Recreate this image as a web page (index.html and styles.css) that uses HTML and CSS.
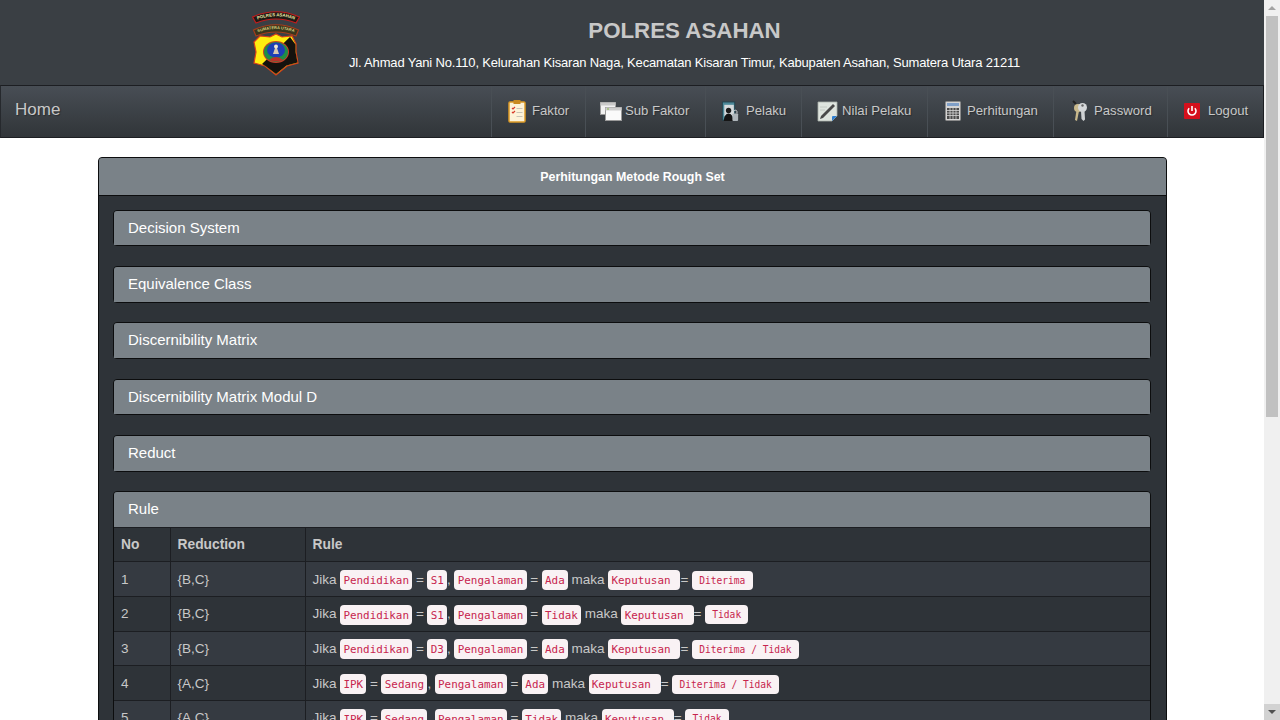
FILE: index.html
```html
<!DOCTYPE html>
<html lang="id">
<head>
<meta charset="utf-8">
<title>Polres Asahan</title>
<link rel="stylesheet" href="styles.css">
</head>
<body>
<div class="page">
  <header class="masthead">
    <svg class="logo" viewBox="0 0 48 66" aria-hidden="true">
      <defs>
        <path id="arc1" d="M3 10.500 Q24 2 45 10.500"/>
        <path id="arc2" d="M4 23 Q24 15 44 23"/>
      </defs>
      <path d="M0.500 7 Q24 -3.500 47.500 7 L44 13 Q24 5 4 13Z" fill="#1d1a16" stroke="#c01c1c" stroke-width="1.200"/>
      <text class="logo-t"><textPath href="#arc1" startOffset="50%">POLRES ASAHAN</textPath></text>
      <path d="M1.500 20 Q24 9.500 46.500 20 L44 26 Q24 18 4 26Z" fill="#38361c" stroke="#a33c1c" stroke-width="1.200"/>
      <text class="logo-t2"><textPath href="#arc2" startOffset="50%">SUMATERA UTARA</textPath></text>
      <path d="M24 24 L30 27 L40 26 L44 34 L44 42 L46 53 L35 56 L24 65 L13 56 L2 53 L4 42 L2 32 L8 26 L18 27Z" fill="#ffee10" stroke="#d8401a" stroke-width="1.200"/>
      <path d="M38 27 L43.500 34.500 L43.500 42 L45.500 52.500 L34.500 55.500 L24 64 L13.500 56 L10 54Z" fill="#15120e"/>
      <ellipse cx="24" cy="42" rx="13" ry="11" fill="#c8402a"/>
      <ellipse cx="24" cy="42" rx="12" ry="10" fill="#1f8f45"/>
      <ellipse cx="24" cy="40" rx="9" ry="7.500" fill="#1d3fb5"/>
      <path d="M17 50 Q24 44 31 50 Q24 53 17 50Z" fill="#b8322a"/>
      <path d="M21 44 L24 35 L27 44Z" fill="#d8c8b0"/>
      <circle cx="24" cy="36.500" r="2" fill="#f0e6d0"/>
    </svg>
    <div class="brand">
      <h1 class="brand-title">POLRES ASAHAN</h1>
      <p class="brand-address">Jl. Ahmad Yani No.110, Kelurahan Kisaran Naga, Kecamatan Kisaran Timur, Kabupaten Asahan, Sumatera Utara 21211</p>
    </div>
  </header>

  <nav class="navbar">
    <a class="nav-home">Home</a>
    <ul class="nav-list">
      <li class="nav-item item-faktor">
        <svg class="ico ico-faktor" viewBox="0 0 18 24" aria-hidden="true">
          <rect x="1" y="3" width="16" height="20" rx="1" fill="#fdf3d8" stroke="#dd9a24" stroke-width="1.500"/>
          <rect x="5.500" y="1" width="7" height="4" fill="#c98a20"/>
          <path d="M4 9l1 1 2-2M4 13l1 1 2-2" fill="none" stroke="#d83a2a" stroke-width="1.200"/>
          <path d="M8.500 9.500h6M8.500 13.500h6M8.500 17.500h6" stroke="#c9c4b6"/>
        </svg>
        <span>Faktor</span>
      </li>
      <li class="nav-item item-sub">
        <svg class="ico ico-sub" viewBox="0 0 22 19" aria-hidden="true">
          <rect x="0.500" y="0.500" width="15" height="12" fill="#f1f1f1" stroke="#9a9a9a"/>
          <rect x="0.500" y="0.500" width="15" height="3" fill="#c9c9c9"/>
          <rect x="5.500" y="5.500" width="16" height="13" fill="#fafafa" stroke="#9a9a9a"/>
          <rect x="5.500" y="5.500" width="16" height="3" fill="#cfcfcf"/>
          <rect x="7" y="6.500" width="2" height="1" fill="#8ab84a"/>
        </svg>
        <span>Sub Faktor</span>
      </li>
      <li class="nav-item item-pelaku">
        <svg class="ico ico-pelaku" viewBox="0 0 18 22" aria-hidden="true">
          <rect x="1" y="1" width="13" height="19" fill="#4d8a9a" stroke="#23434f"/>
          <rect x="3" y="4" width="10" height="12" fill="#d5dadc"/>
          <circle cx="7.500" cy="10" r="2.800" fill="#1c1c1c"/>
          <path d="M2.500 21 Q3 13 7.500 13 Q12 13 12.500 21Z" fill="#151515"/>
          <rect x="11.500" y="13" width="6" height="8" rx="1" fill="#aeb5ba"/>
          <path d="M12.800 13V11a1.800 1.800 0 0 1 3.500 0v2" fill="none" stroke="#d6d9dc"/>
        </svg>
        <span>Pelaku</span>
      </li>
      <li class="nav-item item-nilai">
        <svg class="ico ico-nilai" viewBox="0 0 21 21" aria-hidden="true">
          <path d="M1 1H20V15L15 20H1Z" fill="#dfe5df" stroke="#a8b0a8" stroke-width="0.800"/>
          <path d="M15 20L20 15H16Q15 15 15 16Z" fill="#2f7fd0"/>
          <path d="M4 15L16 3l2 2L6 17l-3 1Z" fill="#4a4a4a"/>
          <path d="M3 6h7M3 9h5" stroke="#c4cac4"/>
        </svg>
        <span>Nilai Pelaku</span>
      </li>
      <li class="nav-item item-hitung">
        <svg class="ico ico-hitung" viewBox="0 0 16 20" aria-hidden="true">
          <rect x="0.500" y="0.500" width="15" height="19" rx="1" fill="#d4d4d4" stroke="#8b8b8b"/>
          <rect x="2" y="2" width="12" height="3" fill="#7f9fc8"/>
          <path d="M2 7h12v11H2z" fill="#4a4a4a"/>
          <path d="M2 9.500h12M2 12h12M2 14.500h12M5 7v11M8 7v11M11 7v11" stroke="#d4d4d4" stroke-width="0.800"/>
        </svg>
        <span>Perhitungan</span>
      </li>
      <li class="nav-item item-pass">
        <svg class="ico ico-pass" viewBox="0 0 16 22" aria-hidden="true">
          <path d="M1 1l3 3" stroke="#222" stroke-width="2"/>
          <circle cx="6" cy="8" r="4" fill="#c9b98c"/>
          <path d="M4.500 10L3 20l2 1 2-10Z" fill="#c9b98c"/>
          <circle cx="10.500" cy="7.500" r="4.500" fill="#d5d8da"/>
          <path d="M9 10.500h3.500l.500 9-1.500 1.500L9.500 19Z" fill="#cfd2d4"/>
          <circle cx="10.500" cy="5.500" r="1.200" fill="#666"/>
        </svg>
        <span>Password</span>
      </li>
      <li class="nav-item item-logout">
        <svg class="ico ico-logout" viewBox="0 0 16 16" aria-hidden="true">
          <rect width="16" height="16" rx="1" fill="#d4101c"/>
          <path d="M5.200 5.200a4 4 0 1 0 5.600 0" fill="none" stroke="#fff" stroke-width="1.600"/>
          <path d="M8 3v5" stroke="#fff" stroke-width="1.600"/>
        </svg>
        <span>Logout</span>
      </li>
    </ul>
  </nav>

  <main class="content">
    <section class="panel panel-outer">
      <h2 class="outer-heading">Perhitungan Metode Rough Set</h2>
      <div class="outer-body">
        <section class="panel panel-inner"><h3 class="inner-heading">Decision System</h3></section>
        <section class="panel panel-inner"><h3 class="inner-heading">Equivalence Class</h3></section>
        <section class="panel panel-inner"><h3 class="inner-heading">Discernibility Matrix</h3></section>
        <section class="panel panel-inner"><h3 class="inner-heading">Discernibility Matrix Modul D</h3></section>
        <section class="panel panel-inner"><h3 class="inner-heading">Reduct</h3></section>
        <section class="panel panel-inner">
          <h3 class="inner-heading">Rule</h3>
          <table class="rules">
            <thead>
              <tr><th class="col-no">No</th><th class="col-red">Reduction</th><th>Rule</th></tr>
            </thead>
            <tbody>
              <tr><td>1</td><td>{B,C}</td><td>Jika <code>Pendidikan</code> = <code>S1</code>, <code>Pengalaman</code> = <code>Ada</code> maka <code>Keputusan </code>= <code class="val"> Diterima </code></td></tr>
              <tr><td>2</td><td>{B,C}</td><td>Jika <code>Pendidikan</code> = <code>S1</code>, <code>Pengalaman</code> = <code>Tidak</code> maka <code>Keputusan </code>= <code class="val"> Tidak </code></td></tr>
              <tr><td>3</td><td>{B,C}</td><td>Jika <code>Pendidikan</code> = <code>D3</code>, <code>Pengalaman</code> = <code>Ada</code> maka <code>Keputusan </code>= <code class="val"> Diterima / Tidak </code></td></tr>
              <tr><td>4</td><td>{A,C}</td><td>Jika <code>IPK</code> = <code>Sedang</code>, <code>Pengalaman</code> = <code>Ada</code> maka <code>Keputusan </code>= <code class="val"> Diterima / Tidak </code></td></tr>
              <tr><td>5</td><td>{A,C}</td><td>Jika <code>IPK</code> = <code>Sedang</code>, <code>Pengalaman</code> = <code>Tidak</code> maka <code>Keputusan </code>= <code class="val"> Tidak </code></td></tr>
            </tbody>
          </table>
        </section>
      </div>
    </section>
  </main>
</div>
<aside class="scrollbar" aria-hidden="true">
  <div class="sb-btn"><span class="arrow-up"></span></div>
  <div class="sb-track"><div class="sb-thumb"></div></div>
  <div class="sb-btn sb-btn-down"><span class="arrow-down"></span></div>
</aside>
</body>
</html>
```
FILE: styles.css
```css
* { box-sizing: border-box; }
html, body { height: 720px; margin: 0; overflow: hidden; }
body {
  display: flex;
  background: #fff;
  font-family: "Liberation Sans", Arial, sans-serif;
  font-size: 14px;
  color: #c8c8c8;
}
.page { flex: 1; min-width: 0; height: 720px; overflow: hidden; }

.masthead {
  display: flex;
  height: 85px;
  padding: 10px 195px 0 252px;
  background: #3a3f44;
}
.logo { width: 48px; height: 66px; flex: none; }
.logo-t { font: bold 4.400px "Liberation Sans", sans-serif; fill: #efe8a8; text-anchor: middle; }
.logo-t2 { font: bold 4px "Liberation Sans", sans-serif; fill: #d8d080; text-anchor: middle; }
.brand { flex: 1; text-align: center; }
.brand-title {
  margin: 8px 0 0;
  font-size: 22.300px;
  line-height: 26px;
  font-weight: bold;
  color: #c8c8c8;
}
.brand-address {
  margin: 10px 0 0;
  font-size: 13px;
  line-height: 18px;
  color: #fff;
  letter-spacing: -0.170px;
  white-space: nowrap;
}

.navbar {
  display: flex;
  justify-content: space-between;
  height: 53px;
  background: linear-gradient(#484e55, #3a3f44 60%, #313539);
  border: 1px solid #1c1e22;
  border-left-color: #26292d;
  text-shadow: 1px 1px 1px rgba(0, 0, 0, .3);
}
.nav-home {
  padding: 14px 14px 0;
  font-size: 17px;
  line-height: 20px;
  color: #c8c8c8;
}
.nav-list { display: flex; margin: 0; padding: 0; list-style: none; }
.nav-item {
  display: flex;
  align-items: center;
  flex: none;
  padding-left: 15px;
  padding-bottom: 1px;
  border-left: 1px solid #494f55;
  font-size: 13.150px;
  color: #c8c8c8;
}
.nav-item span { padding-bottom: 2px; }
.item-faktor { width: 94px; padding-left: 16px; }
.item-sub { width: 120px; padding-left: 14px; }
.item-pelaku { width: 96px; }
.item-nilai { width: 126px; }
.item-hitung { width: 126px; padding-left: 17px; }
.item-pass { width: 114px; padding-left: 18px; }
.item-logout { width: 96px; padding-left: 16px; }
.ico { flex: none; }
.ico-faktor { width: 18px; height: 24px; margin-right: 6px; }
.ico-sub { width: 22px; height: 19px; margin-right: 3px; }
.ico-pelaku { width: 18px; height: 21px; margin-right: 7px; }
.ico-nilai { width: 21px; height: 21px; margin-right: 4px; }
.ico-hitung { width: 16px; height: 20px; margin-right: 6px; }
.ico-pass { width: 16px; height: 22px; margin-right: 6px; }
.ico-logout { width: 16px; height: 16px; margin-right: 8px; }

.content { padding: 19px 97px 0 98px; }
.panel { border-radius: 4px; }
.panel-outer { border: 1px solid #0c0d0e; background: #2e3338; }
.outer-heading {
  margin: 0;
  height: 38px;
  border-bottom: 1px solid #0c0d0e;
  border-radius: 3px 3px 0 0;
  background: #7a8288;
  font-size: 12.400px;
  line-height: 38px;
  font-weight: bold;
  text-align: center;
  color: #fff;
}
.outer-body {
  display: flex;
  flex-direction: column;
  gap: 19.700px;
  padding: 13.500px 15px 15px 14px;
}
.panel-inner { border: 1px solid #0c0d0e; background: #2e3338; }
.inner-heading {
  margin: 0;
  height: 34.700px;
  padding-left: 14px;
  border-radius: 3px 3px 0 0;
  background: #7a8288;
  font-size: 15px;
  line-height: 34.700px;
  font-weight: normal;
  color: #fff;
}
.rules {
  width: 100%;
  border-collapse: collapse;
  table-layout: fixed;
  font-size: 13.500px;
  word-spacing: -0.150px;
}
.rules th, .rules td {
  height: 34.700px;
  padding: 0 7px;
  border: 1px solid #1c1e22;
  text-align: left;
  vertical-align: middle;
  white-space: nowrap;
}
.rules th { height: 34.200px; font-size: 13.800px; font-weight: bold; color: #c8c8c8; }
.rules tr > :first-child { border-left: 0; }
.rules tr > :last-child { border-right: 0; }
.rules tbody tr:nth-child(odd) { background: #353a41; }
.col-no { width: 56px; }
.col-red { width: 135px; }
code {
  padding: 3.500px 3.300px;
  border-radius: 4px;
  background: #f9f2f4;
  color: #c7254e;
  font-family: "DejaVu Sans Mono", "Liberation Mono", monospace;
  font-size: 10.900px;
  word-spacing: 0;
  white-space: pre;
}
code.val { padding: 4px 1.500px; font-size: 9.600px; }

.scrollbar {
  display: flex;
  flex-direction: column;
  flex: none;
  width: 16px;
  height: 720px;
  background: #f0f0f0;
}
.sb-btn {
  display: flex;
  align-items: center;
  justify-content: center;
  height: 16px;
  flex: none;
}
.sb-btn-down { background: #d2d2d2; }
.arrow-up { border: 4px solid transparent; border-top: 0; border-bottom: 4px solid #a3a3a3; }
.arrow-down { border: 4px solid transparent; border-bottom: 0; border-top: 4px solid #505050; }
.sb-track { flex: 1; }
.sb-thumb { height: 401px; margin: 0 2px; background: #c1c1c1; }
```
